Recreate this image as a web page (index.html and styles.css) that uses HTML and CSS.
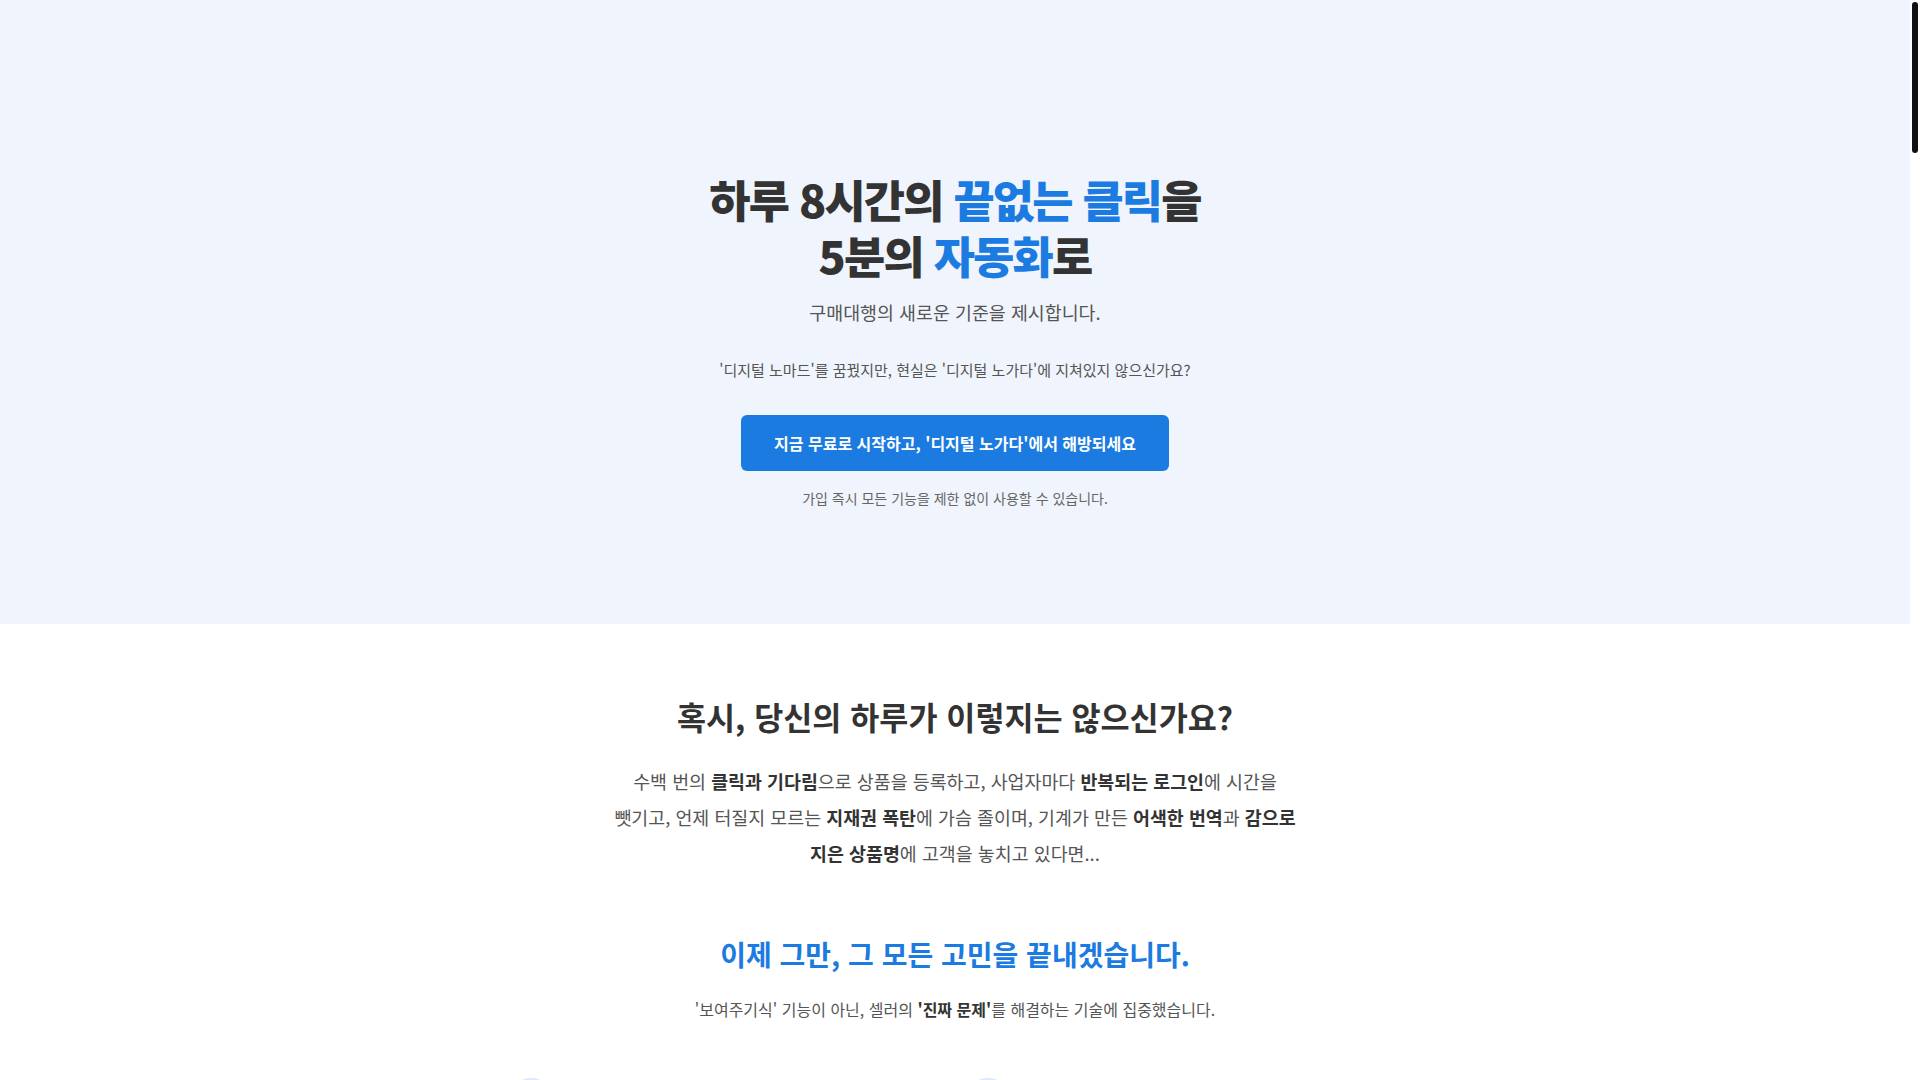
FILE: index.html
```html
<!DOCTYPE html>
<html lang="ko">
<head>
    <meta charset="UTF-8">
    <meta name="viewport" content="width=device-width, initial-scale=1.0">
    <title>구매대행 자동화 솔루션</title>
    <link rel="stylesheet" href="styles.css">
</head>
<body>
<div class="scroll-rail"><div class="scroll-thumb"></div></div>
<main class="page">
    <section class="hero">
        <h1>하루 8시간의 <span class="accent">끝없는 클릭</span>을<br>5분의 <span class="accent">자동화</span>로</h1>
        <p class="hero-sub">구매대행의 새로운 기준을 제시합니다.</p>
        <p class="hero-desc">'디지털 노마드'를 꿈꿨지만, 현실은 '디지털 노가다'에 지쳐있지 않으신가요?</p>
        <a href="#start" class="cta-btn">지금 무료로 시작하고, '디지털 노가다'에서 해방되세요</a>
        <p class="hero-note">가입 즉시 모든 기능을 제한 없이 사용할 수 있습니다.</p>
    </section>

    <section class="problem">
        <h2>혹시, 당신의 하루가 이렇지는 않으신가요?</h2>
        <p class="problem-text">수백 번의 <strong>클릭과 기다림</strong>으로 상품을 등록하고, 사업자마다 <strong>반복되는 로그인</strong>에 시간을 뺏기고, 언제 터질지 모르는 <strong>지재권 폭탄</strong>에 가슴 졸이며, 기계가 만든 <strong>어색한 번역</strong>과 <strong>감으로 지은 상품명</strong>에 고객을 놓치고 있다면...</p>

        <h3 class="solution-title">이제 그만, 그 모든 고민을 끝내겠습니다.</h3>
        <p class="solution-sub">'보여주기식' 기능이 아닌, 셀러의 <strong>'진짜 문제'</strong>를 해결하는 기술에 집중했습니다.</p>

        <div class="feature-grid">
            <div class="feature">
                <div class="feature-icon">
                    <svg viewBox="0 0 24 24" width="22" height="22" fill="none" stroke="currentColor" stroke-width="2" stroke-linecap="round" stroke-linejoin="round"><path d="M13 2 3 14h9l-1 8 10-12h-9l1-8z"/></svg>
                </div>
                <h4>클릭 한 번으로 끝나는 대량 등록</h4>
                <p>상품 링크만 붙여넣으면 수집부터 가공, 마켓 등록까지 한 번에 처리됩니다. 수백 개의 상품도 커피 한 잔 마시는 동안 끝납니다.</p>
            </div>
            <div class="feature">
                <div class="feature-icon">
                    <svg viewBox="0 0 24 24" width="22" height="22" fill="none" stroke="currentColor" stroke-width="2" stroke-linecap="round" stroke-linejoin="round"><rect x="3" y="11" width="18" height="11" rx="2"/><path d="M7 11V7a5 5 0 0 1 10 0v4"/></svg>
                </div>
                <h4>사업자 통합 관리</h4>
                <p>여러 사업자와 마켓 계정을 하나의 화면에서 관리하세요. 더 이상 매번 로그인하고 로그아웃할 필요가 없습니다.</p>
            </div>
            <div class="feature">
                <div class="feature-icon">
                    <svg viewBox="0 0 24 24" width="22" height="22" fill="none" stroke="currentColor" stroke-width="2" stroke-linecap="round" stroke-linejoin="round"><path d="M12 22s8-4 8-10V5l-8-3-8 3v7c0 6 8 10 8 10z"/></svg>
                </div>
                <h4>지재권 위험 사전 차단</h4>
                <p>등록 전에 브랜드와 상표권 위험 단어를 자동으로 검사합니다. 계정 정지 걱정 없이 안심하고 판매하세요.</p>
            </div>
            <div class="feature">
                <div class="feature-icon">
                    <svg viewBox="0 0 24 24" width="22" height="22" fill="none" stroke="currentColor" stroke-width="2" stroke-linecap="round" stroke-linejoin="round"><path d="M5 8h14M9 4v4M7 8c0 4 3 7 7 8M15 8c-1 4-4 7-9 9"/><path d="m13 21 4-9 4 9M14.5 18h5"/></svg>
                </div>
                <h4>자연스러운 AI 번역</h4>
                <p>기계 번역 특유의 어색함 없이, 한국 고객이 읽기 편한 문장으로 상세페이지를 번역합니다.</p>
            </div>
            <div class="feature">
                <div class="feature-icon">
                    <svg viewBox="0 0 24 24" width="22" height="22" fill="none" stroke="currentColor" stroke-width="2" stroke-linecap="round" stroke-linejoin="round"><circle cx="11" cy="11" r="7"/><path d="m21 21-4.3-4.3"/></svg>
                </div>
                <h4>검색에 강한 상품명</h4>
                <p>실제 검색 데이터를 바탕으로 노출이 잘 되는 키워드를 찾아 상품명을 만들어 드립니다.</p>
            </div>
            <div class="feature">
                <div class="feature-icon">
                    <svg viewBox="0 0 24 24" width="22" height="22" fill="none" stroke="currentColor" stroke-width="2" stroke-linecap="round" stroke-linejoin="round"><path d="M3 3v18h18"/><path d="m7 15 4-4 3 3 6-6"/></svg>
                </div>
                <h4>한눈에 보는 판매 현황</h4>
                <p>마켓별 주문과 매출을 하나의 대시보드에서 확인하고, 잘 팔리는 상품에 집중하세요.</p>
            </div>
        </div>
    </section>

    <section class="steps">
        <h2>단 3단계로 시작하세요</h2>
        <div class="step-list">
            <div class="step">
                <span class="step-num">1</span>
                <h4>상품 수집</h4>
                <p>해외 쇼핑몰의 상품 링크를 붙여넣습니다.</p>
            </div>
            <div class="step">
                <span class="step-num">2</span>
                <h4>자동 가공</h4>
                <p>번역, 상품명, 가격, 지재권 검사가 자동으로 진행됩니다.</p>
            </div>
            <div class="step">
                <span class="step-num">3</span>
                <h4>마켓 등록</h4>
                <p>원하는 마켓을 선택하고 등록 버튼을 누르면 끝입니다.</p>
            </div>
        </div>
    </section>

    <section class="compare">
        <h2>이전과 이후, 무엇이 달라질까요?</h2>
        <div class="compare-grid">
            <div class="compare-col before">
                <h4>지금까지는</h4>
                <ul>
                    <li>상품 하나 등록에 10분 이상</li>
                    <li>사업자마다 따로 로그인</li>
                    <li>지재권 경고에 늘 불안</li>
                    <li>번역기 돌린 어색한 상세페이지</li>
                    <li>감에 의존한 상품명</li>
                </ul>
            </div>
            <div class="compare-col after">
                <h4>이제부터는</h4>
                <ul>
                    <li>수백 개 상품을 5분 안에</li>
                    <li>하나의 화면에서 모든 사업자 관리</li>
                    <li>등록 전 자동 지재권 검사</li>
                    <li>자연스러운 AI 번역</li>
                    <li>검색 데이터 기반 상품명</li>
                </ul>
            </div>
        </div>
    </section>

    <section class="reviews">
        <h2>먼저 경험한 셀러들의 이야기</h2>
        <div class="review-list">
            <blockquote class="review">"하루 종일 붙잡고 있던 등록 작업이 이제 점심시간 전에 끝납니다."<span>스마트스토어 셀러 김OO</span></blockquote>
            <blockquote class="review">"지재권 경고 때문에 계정이 정지될까 늘 불안했는데, 이제는 마음 편히 판매합니다."<span>쿠팡 셀러 이OO</span></blockquote>
            <blockquote class="review">"번역이 자연스러워지니 문의도 줄고 구매 전환율이 눈에 띄게 올랐어요."<span>11번가 셀러 박OO</span></blockquote>
        </div>
    </section>

    <section class="pricing">
        <h2>합리적인 요금제</h2>
        <div class="plan-list">
            <div class="plan">
                <h4>무료 체험</h4>
                <p class="price">0원</p>
                <p>모든 기능을 제한 없이 체험해 보세요.</p>
            </div>
            <div class="plan featured">
                <h4>스탠다드</h4>
                <p class="price">월 49,000원</p>
                <p>1인 셀러를 위한 가장 인기 있는 요금제입니다.</p>
            </div>
            <div class="plan">
                <h4>프로</h4>
                <p class="price">월 99,000원</p>
                <p>여러 사업자를 운영하는 팀을 위한 요금제입니다.</p>
            </div>
        </div>
    </section>

    <section class="faq">
        <h2>자주 묻는 질문</h2>
        <div class="faq-list">
            <div class="faq-item">
                <h4>정말 무료로 시작할 수 있나요?</h4>
                <p>네. 가입 즉시 모든 기능을 제한 없이 사용하실 수 있으며, 별도의 카드 등록도 필요하지 않습니다.</p>
            </div>
            <div class="faq-item">
                <h4>어떤 마켓을 지원하나요?</h4>
                <p>스마트스토어, 쿠팡, 11번가, G마켓, 옥션 등 국내 주요 오픈마켓을 지원합니다.</p>
            </div>
            <div class="faq-item">
                <h4>여러 사업자를 함께 운영할 수 있나요?</h4>
                <p>물론입니다. 사업자 수에 제한 없이 하나의 계정에서 모두 관리하실 수 있습니다.</p>
            </div>
            <div class="faq-item">
                <h4>프로그램 설치가 필요한가요?</h4>
                <p>아니요. 웹 브라우저만 있으면 어디서든 바로 사용하실 수 있습니다.</p>
            </div>
        </div>
    </section>

    <section class="final-cta" id="start">
        <h2>이제, 진짜 '디지털 노마드'가 될 시간입니다.</h2>
        <a href="#" class="cta-btn">지금 무료로 시작하기</a>
    </section>

    <footer class="footer">
        <p>© 2024 구매대행 자동화 솔루션. All rights reserved.</p>
    </footer>
</main>
</body>
</html>
```

FILE: styles.css
```css
body {
    margin: 0;
    font-family: "Noto Sans CJK KR", "Noto Sans", sans-serif;
    color: #333333;
    background: #ffffff;
    word-break: keep-all;
}
.page {
    margin-right: 10px;
}
/* scroll indicator on the right edge */
.scroll-rail {
    position: fixed;
    top: 0;
    right: 0;
    width: 10px;
    height: 100vh;
    background: #ffffff;
    z-index: 10;
}
.scroll-thumb {
    width: 6px;
    height: 151px;
    margin: 2px 2px 0;
    background: #111111;
    border-radius: 3px;
}
h1, h2, h3, h4, p, ul {
    margin: 0;
}
.accent {
    color: #1b7be0;
}
.hero {
    background: #f0f4fc;
    text-align: center;
    padding: 171px 20px 116px;
}
.hero h1 {
    font-size: 44.8px;
    line-height: 56px;
    font-weight: 800;
    letter-spacing: -0.04em;
    color: #333333;
}
.hero-sub {
    margin-top: 16px;
    font-size: 18.4px;
    line-height: 26px;
    color: #555555;
}
.hero-desc {
    margin-top: 34px;
    font-size: 15px;
    line-height: 22px;
    color: #555555;
}
.cta-btn {
    display: inline-block;
    margin-top: 34px;
    padding: 17px 33px;
    background: #1b7be0;
    color: #ffffff;
    font-size: 16px;
    line-height: 22px;
    font-weight: 700;
    text-decoration: none;
    border-radius: 6px;
}
.hero-note {
    margin-top: 17px;
    font-size: 14px;
    line-height: 20px;
    color: #666666;
}
.problem {
    text-align: center;
    padding: 70px 20px 140px;
}
.problem h2 {
    font-size: 31.6px;
    line-height: 44px;
    font-weight: 700;
    color: #333333;
}
.problem-text {
    max-width: 700px;
    margin: 25px auto 0;
    font-size: 18.4px;
    line-height: 36px;
    color: #555555;
}
.problem-text strong {
    color: #333333;
}
.solution-title {
    margin-top: 63px;
    font-size: 28px;
    line-height: 40px;
    font-weight: 700;
    color: #1b7be0;
}
.solution-sub {
    margin-top: 23px;
    font-size: 16px;
    line-height: 24px;
    color: #555555;
}
.solution-sub strong {
    color: #333333;
}
.feature-grid {
    display: grid;
    grid-template-columns: repeat(2, 1fr);
    gap: 64px 18px;
    max-width: 896px;
    margin: 57px auto 0;
    text-align: left;
}
.feature-icon {
    width: 48px;
    height: 48px;
    border-radius: 50%;
    background: #dce9fb;
    color: #1b7be0;
    display: flex;
    align-items: center;
    justify-content: center;
}
.feature h4 {
    margin-top: 18px;
    font-size: 20px;
    color: #333333;
}
.feature p {
    margin-top: 10px;
    font-size: 16px;
    line-height: 1.8;
    color: #555555;
}
.steps, .faq {
    background: #f0f4fc;
    text-align: center;
    padding: 140px 20px;
}
.steps h2, .compare h2, .reviews h2, .pricing h2, .faq h2, .final-cta h2 {
    font-size: 32px;
    line-height: 44px;
    color: #333333;
}
.step-list {
    display: grid;
    grid-template-columns: repeat(3, 1fr);
    gap: 32px;
    max-width: 1000px;
    margin: 60px auto 0;
}
.step {
    background: #ffffff;
    border-radius: 12px;
    padding: 48px 28px;
    box-shadow: 0 4px 16px rgba(30, 60, 120, 0.06);
}
.step-num {
    display: inline-flex;
    width: 44px;
    height: 44px;
    border-radius: 50%;
    background: #1b7be0;
    color: #ffffff;
    font-weight: 700;
    align-items: center;
    justify-content: center;
}
.step h4 {
    margin-top: 20px;
    font-size: 20px;
}
.step p {
    margin-top: 12px;
    color: #555555;
    line-height: 1.8;
}
.compare {
    text-align: center;
    padding: 140px 20px;
}
.compare-grid {
    display: grid;
    grid-template-columns: repeat(2, 1fr);
    gap: 32px;
    max-width: 900px;
    margin: 60px auto 0;
    text-align: left;
}
.compare-col {
    border-radius: 12px;
    padding: 40px;
}
.compare-col h4 {
    font-size: 20px;
}
.compare-col ul {
    margin-top: 20px;
    padding-left: 20px;
    line-height: 2.2;
    color: #555555;
}
.before {
    background: #f6f6f8;
}
.after {
    background: #e8f1fd;
}
.after h4 {
    color: #1b7be0;
}
.reviews {
    text-align: center;
    padding: 140px 20px;
    background: #f0f4fc;
}
.review-list {
    display: flex;
    flex-direction: column;
    gap: 28px;
    max-width: 760px;
    margin: 60px auto 0;
}
.review {
    margin: 0;
    padding: 40px 36px;
    background: #ffffff;
    border-radius: 12px;
    font-size: 18px;
    line-height: 1.8;
    color: #333333;
}
.review span {
    display: block;
    margin-top: 16px;
    font-size: 14px;
    color: #888888;
}
.pricing {
    text-align: center;
    padding: 140px 20px;
}
.plan-list {
    display: grid;
    grid-template-columns: repeat(3, 1fr);
    gap: 28px;
    max-width: 1000px;
    margin: 60px auto 0;
}
.plan {
    border: 1px solid #e3e8f0;
    border-radius: 12px;
    padding: 56px 28px;
}
.plan h4 {
    font-size: 20px;
}
.plan .price {
    margin: 20px 0 16px;
    font-size: 30px;
    font-weight: 700;
    color: #1b7be0;
}
.plan p {
    color: #555555;
    line-height: 1.8;
}
.featured {
    border: 2px solid #1b7be0;
}
.faq-list {
    max-width: 760px;
    margin: 60px auto 0;
    text-align: left;
    display: flex;
    flex-direction: column;
    gap: 20px;
}
.faq-item {
    background: #ffffff;
    border-radius: 10px;
    padding: 32px;
}
.faq-item h4 {
    font-size: 18px;
}
.faq-item p {
    margin-top: 12px;
    color: #555555;
    line-height: 1.8;
}
.final-cta {
    text-align: center;
    padding: 180px 20px;
}
.footer {
    background: #222833;
    color: #9aa3b2;
    text-align: center;
    padding: 60px 20px;
    font-size: 14px;
}
```
